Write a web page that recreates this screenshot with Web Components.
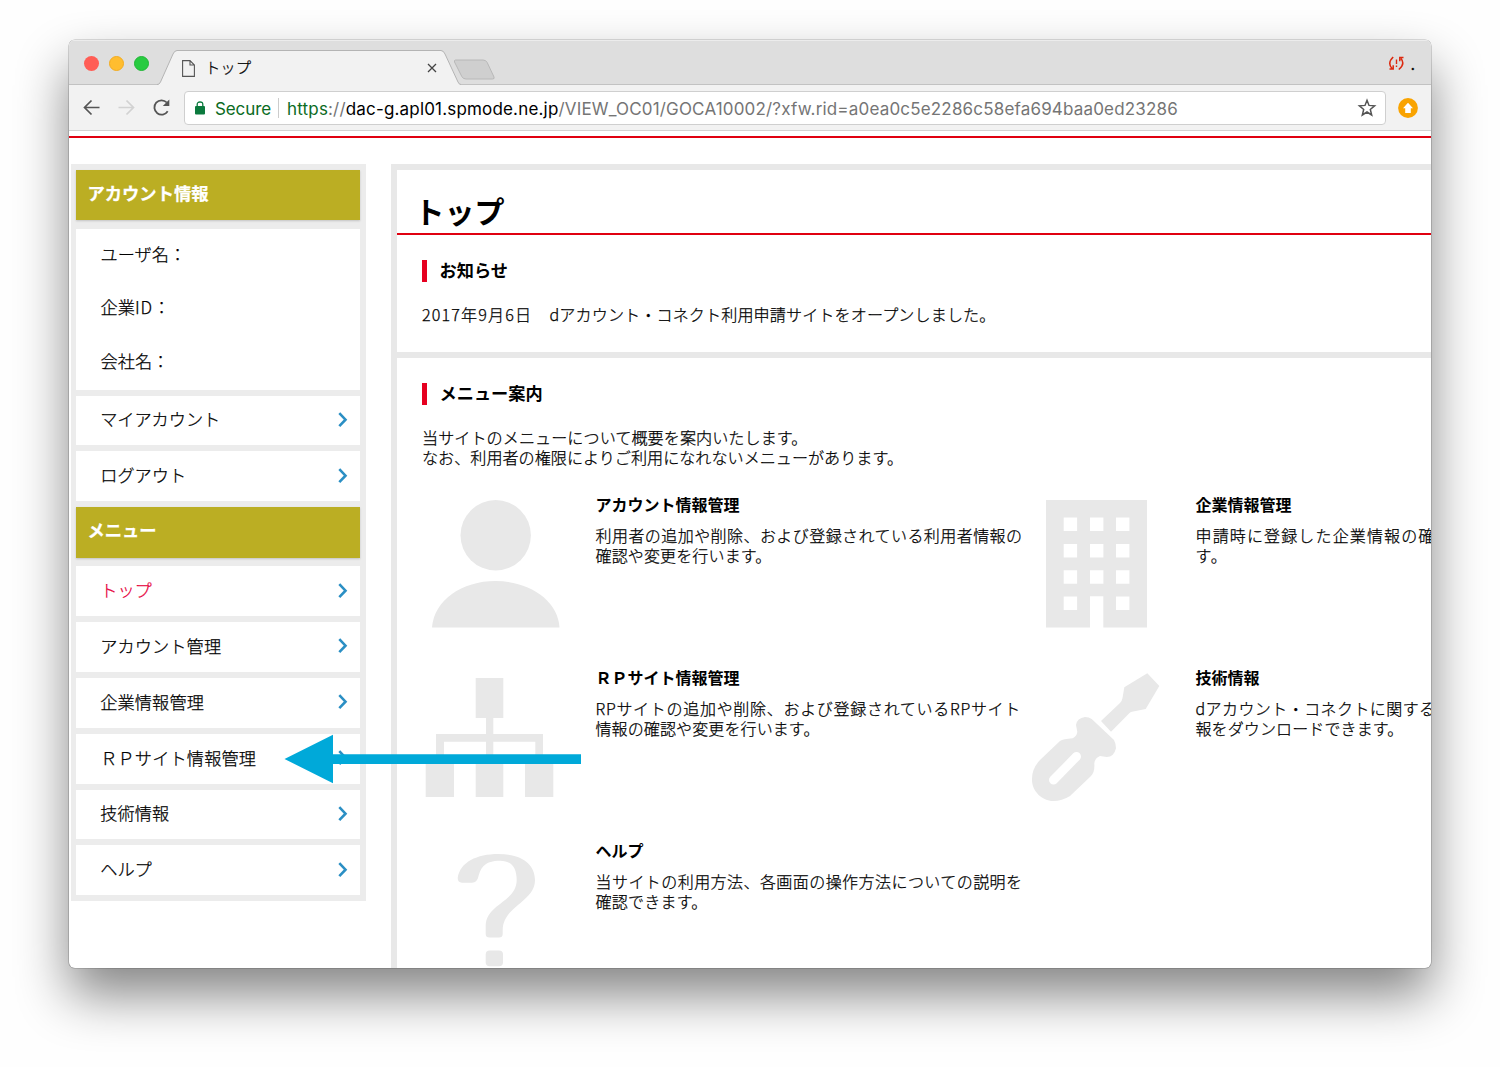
<!DOCTYPE html>
<html lang="ja">
<head>
<meta charset="utf-8">
<title>トップ</title>
<style>
  body { margin: 0; background: #fefefe; width: 1500px; height: 1067px; overflow: hidden;
    font-family: "Noto Sans CJK JP", sans-serif; font-weight: 300; color: #000; -webkit-text-stroke: .25px; }
</style>
</head>
<body>
<browser-window>
  <tab-strip slot="chrome" label="トップ"></tab-strip>
  <url-bar slot="chrome"></url-bar>
  <side-nav>
    <nav-heading>アカウント情報</nav-heading>
    <account-info></account-info>
    <nav-item w="120">マイアカウント</nav-item>
    <nav-item w="86">ログアウト</nav-item>
    <nav-heading>メニュー</nav-heading>
    <nav-item w="51.6" active>トップ</nav-item>
    <nav-item w="121">アカウント管理</nav-item>
    <nav-item w="103.8">企業情報管理</nav-item>
    <nav-item w="156">ＲＰサイト情報管理</nav-item>
    <nav-item w="69">技術情報</nav-item>
    <nav-item w="51.6">ヘルプ</nav-item>
  </side-nav>
  <main-panel></main-panel>
</browser-window>
<pointer-arrow></pointer-arrow>
<script>
class Base extends HTMLElement {
  constructor() {
    super();
    this.attachShadow({ mode: "open" });
  }
  connectedCallback() { this.shadowRoot.innerHTML = this.render(); }
}

/* One line of text spread evenly over a given width. */
customElements.define("fit-text", class extends Base {
  render() { return `<style>:host{display:block;white-space:nowrap}span{display:inline-block}</style><span><slot></slot></span>`; }
  connectedCallback() {
    super.connectedCallback();
    const w = parseFloat(this.getAttribute("w"));
    if (!w) return;
    const span = this.shadowRoot.querySelector("span");
    const n = [...this.textContent].length;
    const now = span.getBoundingClientRect().width;
    span.style.letterSpacing = ((w - now) / n) + "px";
  }
});

customElements.define("browser-window", class extends Base {
  render() { return `<style>
    :host{display:flex;flex-direction:column;box-sizing:border-box;width:1362px;height:928px;margin:40px 0 0 69px;border-radius:6px;background:#fff;
      box-shadow:0 0 0 .6px rgba(0,0,0,.25),0 27px 52px rgba(0,0,0,.48);overflow:hidden}
    .view{display:flex;align-items:flex-start;flex:1;margin-top:5px;border-top:2px solid #e00010;padding:25.5px 0 0 1.5px;min-height:0;position:relative}
    </style><slot name="chrome"></slot><div class="view"><slot></slot></div>`; }
});

customElements.define("tab-strip", class extends Base {
  render() { return `<style>
    :host{display:flex;height:45px;flex:none;background:#dedede;box-shadow:inset 0 1px #ececec,inset 0 -1px #c2c2c2;position:relative}
    .lights{display:flex;gap:10px;padding:16px 0 0 15px;width:65px;flex:none}
    i{width:15px;height:15px;border-radius:50%;box-sizing:border-box;flex:none}
    .tab{position:relative;display:flex;width:305px;height:45px;margin-left:7px}
    .tab>*{position:relative}
    .tab>svg.bg{position:absolute;left:-15.500px;top:0}
    .doc{margin:20px 0 0 26px;width:13px;height:17px;flex:none}
    fit-text{font-size:15.3px;line-height:20px;margin:16px 0 0 10px;width:60px}
    .x{margin:23px 0 0 162px}
    .new{margin:19px 0 0 -10px;position:relative}
    .right{margin-left:auto;display:flex;padding:14px 16px 0 0;font:16px/20px Inter,sans-serif;gap:5px}
    .right svg{margin-top:1px}
    </style>
    <div class="lights"><i style="background:#ff5d55"></i><i style="background:#ffbd2f;border:1px solid #f3ac20"></i><i style="background:#28cb41;border:1px solid #20b736"></i></div>
    <div class="tab"><svg class="bg" width="320" height="45"><path d="M16 45Q18 45 19.500 42L32 14Q33.500 11 36 11H300Q302.500 11 304 14L317 42Q318 45 320 45Z" fill="#f2f2f2"/><path d="M16 44.500Q18 45 19.500 42L32 14Q33.500 10.500 36 10.500H300Q302.500 10.500 304 14L317 42Q318 44.500 320 44.500" fill="none" stroke="#b4b4b4"/></svg>
      <svg class="doc" viewBox="0 0 13 17" fill="none" stroke="#555" stroke-width="1.100"><path d="M.6.6H8L12.400 5V16.400H.6ZM8 .6V5H12.400"/></svg>
      <fit-text w="46">${this.getAttribute("label")}</fit-text>
      <svg class="x" width="10" height="10" stroke="#444" stroke-width="1.300"><path d="M1 1L9 9M9 1L1 9"/></svg>
    </div>
    <svg class="new" width="46" height="22"><path d="M4.500 1H32Q35 1 36.200 3.500L43 18Q43.800 20 41.500 20H15Q12 20 10.800 17.500L3.500 3Q3 1 4.500 1Z" fill="#cfcfcf" stroke="#b8b8b8"/></svg>
    <div class="right"><svg width="17" height="17" viewBox="0 0 17 17" fill="none" stroke="#dc2a10" stroke-width="1.500"><path d="M5.200 2Q-1 8 4 13.500M1.500 14H5.200V10.200M10.800 14.500Q17.500 9 13 3.500M15.500 2.500H11.800V6.200"/><path d="M8.500 4.500V9M8.500 10.500V12" stroke-width="1.400"/></svg><span>.</span></div>`; }
});

customElements.define("url-bar", class extends Base {
  render() { return `<style>
    :host{display:flex;height:45px;box-sizing:content-box;flex:none;background:#f2f2f2;border-bottom:1px solid #d2d2d2;align-items:flex-start;-webkit-text-stroke:0}
    .nav{display:flex;width:114.500px;padding:13px 0 0 13px;box-sizing:border-box;gap:15px;flex:none}
    .nav svg{width:20px;height:20px;flex:none}
    .field{display:flex;align-items:center;width:1202px;height:34px;margin-top:6px;box-sizing:border-box;border:1px solid #cfcfcf;border-radius:4px;background:#fff;font:400 17px/32px Inter,sans-serif;flex:none;color:#757575}
    .lock{margin:0 10px 1px 10.500px;flex:none}
    .sec{color:#0b6b23;width:63px;flex:none}
    fit-text{padding-top:1px}
    .bar{width:1px;height:20px;background:#ccc;margin:0 8px 0 0}
    .star{margin-left:auto;margin-right:7.500px}
    .up{margin:13px 0 0 12.500px}
    b{font-weight:400;color:#0b6b23}em{font-style:normal;color:#000}
    </style>
    <div class="nav">
      <svg viewBox="0 0 20 20" fill="none" stroke="#555" stroke-width="1.700"><path d="M17.500 9.500H3M9.500 2.500L2.500 9.500L9.500 16.500"/></svg>
      <svg viewBox="0 0 20 20" fill="none" stroke="#d2d2d2" stroke-width="1.700"><path d="M1.500 9.500H16M9.500 2.500L16.500 9.500L9.500 16.500"/></svg>
      <svg viewBox="0 0 20 20" fill="none" stroke="#555" stroke-width="1.800"><path d="M15.700 13.300A7.200 7.200 0 1 1 14.800 4.500"/><path d="M17.300 1.500V8H10.800Z" fill="#555" stroke="none"/></svg>
    </div>
    <div class="field"><svg class="lock" width="10" height="14"><rect y="5" width="10" height="8.500" rx="1" fill="#0b7a3e"/><path d="M2.200 6V3.500Q2.200 1 5 1T7.800 3.500V6" fill="none" stroke="#0b7a3e" stroke-width="1.300"/></svg>
      <fit-text class="sec" w="56">Secure</fit-text><span class="bar"></span>
      <fit-text w="891"><b>https</b>://<em>dac-g.apl01.spmode.ne.jp</em>/VIEW_OC01/GOCA10002/?xfw.rid=a0ea0c5e2286c58efa694baa0ed23286</fit-text>
      <svg class="star" width="20" height="20" fill="none" stroke="#555" stroke-width="1.500"><path d="M10 2.300L12 7.400L17.600 7.800L13.300 11.400L14.700 17L10 14L5.300 17L6.700 11.400L2.400 7.800L8 7.400Z"/></svg>
    </div>
    <svg class="up" width="20" height="20"><circle cx="10" cy="10" r="9.900" fill="#f9a300"/><path d="M10 4.700L15 10.200H12.800V15H7.200V10.200H5Z" fill="#fff"/></svg>`; }
});

customElements.define("side-nav", class extends Base {
  render() { return `<style>:host{display:flex;flex-direction:column;gap:6px;box-sizing:border-box;width:295.500px;height:737px;flex:none;background:#ececec;padding:6px 6px 6px 5px}</style><slot></slot>`; }
});

customElements.define("nav-heading", class extends Base {
  render() { return `<style>:host{display:block;height:50.500px;box-sizing:border-box;background:#bbae23;color:#fff;font:bold 17.300px/46.500px "Noto Sans CJK JP",sans-serif;padding-left:12px;margin-bottom:2.500px;box-shadow:0 1px 2px rgba(0,0,0,.18);flex:none}</style><slot></slot>`; }
});

customElements.define("account-info", class extends Base {
  render() { return `<style>:host{display:flex;flex-direction:column;height:161px;box-sizing:border-box;background:#fff;padding-left:25px;font-size:17.200px;flex:none}div{height:54px;line-height:50px}div:first-child{line-height:49px}</style>
    <div>ユーザ名：</div><div>企業<fit-text style="display:inline-block" w="18">ID</fit-text>：</div><div>会社名：</div>`; }
});

customElements.define("nav-item", class extends Base {
  render() { return `<style>:host{display:flex;justify-content:space-between;align-items:center;height:49.850px;box-sizing:border-box;background:#fff;padding:0 12px 1px 24.700px;font-size:17.200px;line-height:24px;flex:none}
    :host([active]){color:#e6003b}fit-text{margin-bottom:1px}</style>
    <fit-text w="${this.getAttribute("w")}">${this.textContent}</fit-text>
    <svg width="10" height="16" fill="none" stroke="#2b8fc4" stroke-width="2.600"><path d="M1.300 1.200L7.500 7.700L1.300 14.200"/></svg>`; }
});

customElements.define("section-title", class extends Base {
  render() { return `<style>:host{display:block;border-left:5px solid #e60020;height:22px;padding-left:12.500px;font:bold 17.200px/20px "Noto Sans CJK JP",sans-serif;-webkit-text-stroke:0}</style><slot></slot>`; }
});

customElements.define("guide-card", class extends Base {
  render() { return `<style>:host{display:flex;width:600px;height:173.200px;flex:none}
    .t{flex:none}h3{margin:0 0 11px;font-size:16px;line-height:20px;-webkit-text-stroke:0}fit-text{font-size:16px;line-height:20px}
    ::slotted(svg){width:148px;height:150px;margin:1px 25.500px 0 0;flex:none;fill:#e8e8e8}</style>
    <slot></slot><div class="t"><h3>${this.getAttribute("label")}</h3>${(this.getAttribute("lines")).split("|").map(l => { const [t, w] = l.split("@"); return `<fit-text w="${w}">${t}</fit-text>`; }).join("")}</div>`; }
});

customElements.define("main-panel", class extends Base {
  render() { return `<style>
    :host{display:block;margin-left:25px;width:1300px;height:900px;flex:none;border-left:6px solid #e8e8e8;border-top:6px solid #e8e8e8;box-sizing:border-box}
    h1{margin:0;height:63.500px;border-bottom:2px solid #e00010;padding-left:17.500px;font-size:30px;line-height:81px;-webkit-text-stroke:0}
    .news{height:122.500px;border-bottom:6px solid #e8e8e8;box-sizing:border-box;padding:25px 0 0 25px;margin-bottom:25px}
    p{margin:22px 0 0;font-size:16.100px;line-height:20px}
    .date{display:flex}
    .menu{padding-left:25px}
    .grid{display:flex;flex-wrap:wrap;width:1210px;margin-top:27px}
    </style>
    <h1>トップ</h1>
    <div class="news"><section-title>お知らせ</section-title><p class="date"><fit-text w="127.500">2017年9月6日　</fit-text><fit-text w="446">dアカウント・コネクト利用申請サイトをオープンしました。</fit-text></p></div>
    <div class="menu"><section-title>メニュー案内</section-title>
      <p><fit-text w="385.500">当サイトのメニューについて概要を案内いたします。</fit-text><fit-text w="481">なお、利用者の権限によりご利用になれないメニューがあります。</fit-text></p>
      <div class="grid">
        <guide-card label="アカウント情報管理" lines="利用者の追加や削除、および登録されている利用者情報の@427|確認や変更を行います。@176">
          <svg viewBox="422 495 148 150"><circle cx="495.700" cy="535.300" r="35.200"/><path d="M432 627.500C434 600 462 581 495.500 581S558 600 559.500 627.500Z"/></svg></guide-card>
        <guide-card label="企業情報管理" lines="申請時に登録した企業情報の確@240|す。@32">
          <svg viewBox="1022 495 148 150"><path fill-rule="evenodd" d="M1046 500H1147V627.500H1103.300V596.300H1090V627.500H1046ZM${[517.5, 544.1, 570.3].flatMap(y => [1063.7, 1090, 1116].map(x => `${x} ${y}h13.400v13.400h-13.400z`)).join("M")}M1063.700 596.500h13.400v13.400h-13.400zM1116 596.500h13.400v13.400h-13.400z"/></svg></guide-card>
        <guide-card label="ＲＰサイト情報管理" lines="RPサイトの追加や削除、および登録されているRPサイト@425.5|情報の確認や変更を行います。@224">
          <svg viewBox="422 668 148 150"><path d="M475.700 678H503.300V718H493.300V734H543V764H553.300V797H525V764H535.300V741.700H493.300V764H503.300V797H475.700V764H486V741.700H444V764H454V797H425.700V764H436V734H486V718H475.700Z"/></svg></guide-card>
        <guide-card label="技術情報" lines="dアカウント・コネクトに関する@240|報をダウンロードできます。@208">
          <svg viewBox="1022 668 148 150"><path d="M1147.300 673.300L1159.300 686L1145.700 709L1132 711.700Q1130.500 712 1129 713.500L1111 731.700L1101 721L1120 703Q1122 701 1122.500 698L1124.300 687.300Z"/><path d="M1085 717Q1089 717 1091.700 719L1114 740Q1116 744 1116 748.300Q1114 757 1106.700 757L1100 756Q1095 758 1094.300 763.300Q1095 772 1091 776L1070 796Q1062 801 1053.300 801C1042 801 1032 791 1032 780Q1031.500 769 1040 760L1060 741Q1063 739 1072.700 738.300Q1077 736 1077.300 731.700L1076 725Q1077 718 1085 717Z"/><path d="M1076.500 756.500L1053.500 780" stroke="#fff" stroke-width="9" stroke-linecap="round"/></svg></guide-card>
        <guide-card label="ヘルプ" lines="当サイトの利用方法、各画面の操作方法についての説明を@427|確認できます。@112">
          <svg viewBox="422 841 148 150"><path d="M462 882.700Q457.700 882.500 457.700 878C460 862 477 854 498.300 854C522 854 535 864 535 880C535 902 503 906 502.700 930V934Q502.700 937.500 499 937.500H489.500Q485.700 937.500 485.700 934V926C486 904 516.700 902 516.700 880C516.700 867 511 860.700 500 860.700C485 860.700 481 867 478.300 877Q477 882.700 472 882.700Z"/><rect x="485.700" y="950.500" width="17.300" height="15.700" rx="4"/></svg></guide-card>
      </div>
    </div>`; }
});

/* Callout that lies over the page and points at a menu entry. */
customElements.define("pointer-arrow", class extends Base {
  render() { return `<style>:host{display:block;position:absolute;left:284px;top:734px}svg{display:block}</style>
    <svg width="298" height="50" fill="#00a9d9"><path d="M.5 25L49 .8V20.200H297V30H49V49.200Z"/></svg>`; }
});
</script>
</body>
</html>
